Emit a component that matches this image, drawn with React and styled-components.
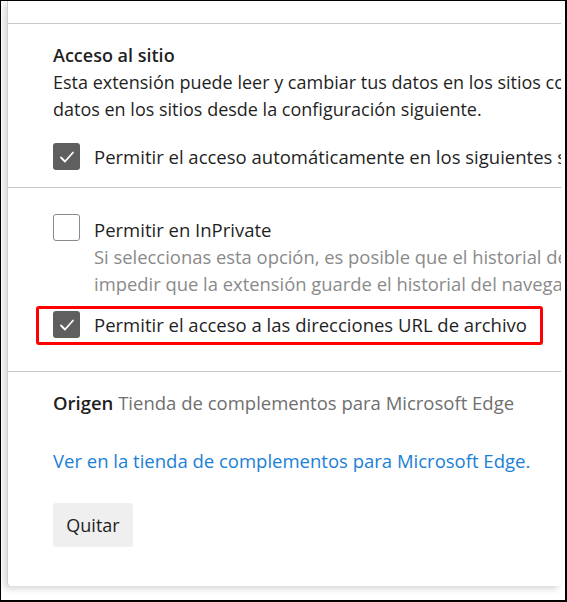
import React from 'react'
import styled, { createGlobalStyle } from 'styled-components'

const GlobalStyle = createGlobalStyle`
    body {
        margin: 0;
        background: #ffffff;
        font-family: "Open Sans", "Liberation Sans", sans-serif;
    }
`

const Frame = styled.div`
    box-sizing: border-box;
    width: 567px;
    height: 602px;
    border-style: solid;
    border-color: #000000;
    border-width: 1px 2px 2px 1px;
    background: #ffffff;
    padding: 0 4px 0 6px;
    overflow: hidden;
`

const Card = styled.div`
    background: #ffffff;
    border-left: 1px solid #d0d0d0;
    border-radius: 0 0 4px 4px;
    box-shadow: -3px 3px 6px rgba(0, 0, 0, 0.16);
    overflow: hidden;
    color: #1f1f1f;
    font-size: 18.5px;
    line-height: 27px;
`

const Section = styled.div`
    padding: ${p => p.$pad || '0 0 0 45px'};
    height: ${p => p.$height || 'auto'};
    border-top: ${p => (p.$first ? 'none' : '1px solid #c8c8c8')};
    white-space: nowrap;
`

const Title = styled.div`
    font-size: 18px;
    font-weight: 600;
`

const Desc = styled.div`
    font-size: ${p => p.$size || 18}px;
    color: ${p => p.$tone || '#1f1f1f'};
`

const Row = styled.label`
    position: relative;
    display: flex;
    align-items: ${p => (p.$top ? 'flex-start' : 'center')};
    gap: 14px;
    margin-top: ${p => p.$mt || 0}px;

    ${p =>
        p.$highlight &&
        `
        &::after {
            content: '';
            position: absolute;
            top: -5px;
            left: -17px;
            width: 507px;
            height: 39px;
            box-sizing: border-box;
            border: 3px solid #ff0000;
            border-radius: 3px;
        }
    `}
`

const Box = styled.span`
    flex: none;
    box-sizing: border-box;
    width: 27px;
    height: 27px;
    border-radius: 3px;
    background: ${p => (p.$checked ? '#5f5f5f' : '#ffffff')};
    border: ${p => (p.$checked ? 'none' : '1px solid #8a8a8a')};
    display: flex;
    align-items: center;
    justify-content: center;
`

const TextCol = styled.div`
    padding-top: 2px;
`

const Origin = styled.div`
    color: #6f6f6f;

    b {
        color: #1f1f1f;
        font-weight: 600;
    }
`

const Link = styled.a`
    display: block;
    margin-top: 31px;
    color: #1a80d8;
    text-decoration: none;
`

const Button = styled.button`
    display: block;
    margin-top: 29px;
    width: 80px;
    height: 44px;
    border: none;
    border-radius: 3px;
    background: #efefef;
    color: #1f1f1f;
    font-family: inherit;
    font-size: 18px;
`

const Check = ({ checked }) => (
    <Box $checked={checked}>
        {checked && (
            <svg width="20" height="20" viewBox="0 0 20 20">
                <polyline
                    points="4,10.5 8,14.5 16,5.5"
                    fill="none"
                    stroke="#ffffff"
                    strokeWidth="1.8"
                    strokeLinecap="round"
                    strokeLinejoin="round"
                />
            </svg>
        )}
    </Box>
)

export default function App() {
    return (
        <Frame>
            <GlobalStyle />
            <Card>
                <Section $first $height="22px" />

                <Section $pad="18px 0 17px 45px">
                    <Title>Acceso al sitio</Title>
                    <Desc>
                        Esta extensión puede leer y cambiar tus datos en los sitios con permiso. Puedes controlar el acceso de la extensión a tus
                        <br />
                        datos en los sitios desde la configuración siguiente.
                    </Desc>
                    <Row $mt={20}>
                        <Check checked />
                        <span>Permitir el acceso automáticamente en los siguientes sitios</span>
                    </Row>
                </Section>

                <Section $pad="26px 0 33px 45px">
                    <Row $top>
                        <Check />
                        <TextCol>
                            <div>Permitir en InPrivate</div>
                            <Desc $size={18.4} $tone="#8a8a8a">
                                Si seleccionas esta opción, es posible que el historial de navegación InPrivate no se proteja y no se puede
                                <br />
                                impedir que la extensión guarde el historial del navegador.
                            </Desc>
                        </TextCol>
                    </Row>
                    <Row $mt={14} $highlight>
                        <Check checked />
                        <span>Permitir el acceso a las direcciones URL de archivo</span>
                    </Row>
                </Section>

                <Section $pad="17px 0 39px 45px">
                    <Origin>
                        <b>Origen</b> Tienda de complementos para Microsoft Edge
                    </Origin>
                    <Link href="#">Ver en la tienda de complementos para Microsoft Edge.</Link>
                    <Button>Quitar</Button>
                </Section>
            </Card>
        </Frame>
    )
}
